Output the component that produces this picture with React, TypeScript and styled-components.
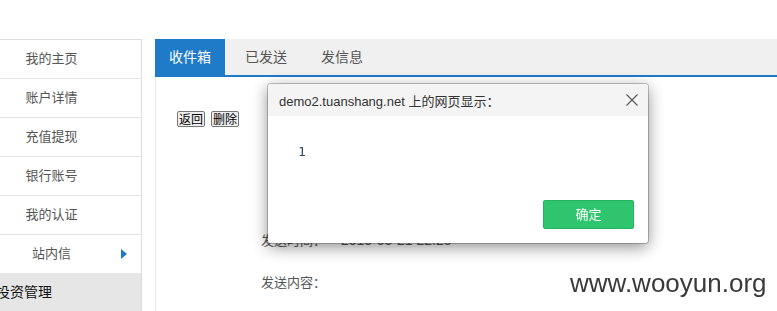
import React from 'react';
import styled, { createGlobalStyle } from 'styled-components';

const GlobalStyle = createGlobalStyle`
  html, body {
    margin: 0;
    padding: 0;
    background: #fff;
    overflow: hidden;
  }
  body {
    font-family: "Liberation Sans", "Noto Sans CJK SC", sans-serif;
  }
`;

const menuItems = ['我的主页', '账户详情', '充值提现', '银行账号', '我的认证', '站内信'];
const tabs = ['收件箱', '已发送', '发信息'];

const App = () => {
  return (
    <>
      <GlobalStyle />
      <S.page>
        <S.sidebar>
          {menuItems.map((name, i) => (
            <S.menuItem key={i}>
              {name}
              {i === menuItems.length - 1 && <S.arrow />}
            </S.menuItem>
          ))}
          <S.groupHeader>投资管理</S.groupHeader>
        </S.sidebar>
        <S.main>
          <S.tabBar>
            {tabs.map((t, i) => (
              <S.tab key={i} $active={i === 0}>
                {t}
              </S.tab>
            ))}
          </S.tabBar>
          <S.panel>
            <S.btnRow>
              <S.plainBtn>返回</S.plainBtn>
              <S.plainBtn>删除</S.plainBtn>
            </S.btnRow>
            <S.infoBlock>
              <S.infoRow>
                发送时间：<S.infoValue>2015-05-21 22:25</S.infoValue>
              </S.infoRow>
              <S.infoRow>发送内容：</S.infoRow>
            </S.infoBlock>
          </S.panel>
        </S.main>
      </S.page>

      <S.dialog>
        <S.dialogHeader>
          <S.dialogTitle>demo2.tuanshang.net 上的网页显示：</S.dialogTitle>
          <S.closeBtn>
            <svg width="12" height="12" viewBox="0 0 12 12">
              <path d="M0.5 0.5 L11.5 11.5 M11.5 0.5 L0.5 11.5" stroke="#555" strokeWidth="1.1" fill="none" />
            </svg>
          </S.closeBtn>
        </S.dialogHeader>
        <S.dialogBody>1</S.dialogBody>
        <S.dialogFooter>
          <S.okBtn>确定</S.okBtn>
        </S.dialogFooter>
      </S.dialog>

      <S.watermark>www.wooyun.org</S.watermark>
    </>
  );
};

const S = {
  page: styled.div`
    display: flex;
    align-items: flex-start;
    padding-top: 39px;
    height: 311px;
    box-sizing: border-box;
  `,
  sidebar: styled.div`
    margin-left: -38px;
    width: 179px;
    flex-shrink: 0;
    border-top: 1px solid #ddd;
    border-right: 1px solid #ddd;
  `,
  menuItem: styled.div`
    position: relative;
    height: 38px;
    line-height: 38px;
    border-bottom: 1px solid #e6e6e6;
    text-align: center;
    font-size: 13px;
    color: #555;
  `,
  arrow: styled.span`
    position: absolute;
    right: 14px;
    top: 14px;
    width: 0;
    height: 0;
    border-top: 5px solid transparent;
    border-bottom: 5px solid transparent;
    border-left: 6px solid #1f7ac8;
  `,
  groupHeader: styled.div`
    height: 37px;
    line-height: 37px;
    padding-left: 34px;
    background: #e6e6e6;
    border-bottom: 1px solid #ddd;
    font-size: 14px;
    color: #111;
  `,
  main: styled.div`
    flex: 1;
    margin-left: 13px;
    align-self: stretch;
    display: flex;
    flex-direction: column;
  `,
  tabBar: styled.div`
    display: flex;
    height: 36px;
    background: #f0f0f0;
    border-bottom: 2px solid #1f7ac8;
  `,
  tab: styled.div<{ $active?: boolean }>`
    padding: 0 14px;
    margin-left: ${(p) => (p.$active ? '0' : '6px')};
    line-height: 36px;
    font-size: 14px;
    color: ${(p) => (p.$active ? '#fff' : '#555')};
    background: ${(p) => (p.$active ? '#1f7ac8' : 'transparent')};
  `,
  panel: styled.div`
    flex: 1;
    border-left: 1px solid #e8e8e8;
    padding: 34px 0 0 21px;
  `,
  btnRow: styled.div`
    display: flex;
    gap: 6px;
  `,
  plainBtn: styled.button`
    height: 16px;
    padding: 0 1px;
    font-family: "Noto Sans CJK SC", sans-serif;
    font-size: 12px;
    line-height: 14px;
    color: #000;
    background: #efefef;
    border: 1px solid #767676;
    border-radius: 2px;
  `,
  infoBlock: styled.div`
    margin-top: 103px;
    padding-left: 84px;
    display: flex;
    flex-direction: column;
    gap: 22px;
  `,
  infoRow: styled.div`
    line-height: 20px;
    font-size: 13px;
    color: #555;
  `,
  infoValue: styled.span`
    margin-left: 15px;
    font-size: 14px;
  `,
  dialog: styled.div`
    position: fixed;
    left: 268px;
    top: 84px;
    width: 380px;
    height: 159px;
    background: #fff;
    border-radius: 3px;
    box-shadow: 0 0 0 1px rgba(0, 0, 0, 0.22), 0 4px 16px rgba(0, 0, 0, 0.45);
    display: flex;
    flex-direction: column;
    overflow: hidden;
  `,
  dialogHeader: styled.div`
    height: 32px;
    background: #f4f4f4;
    display: flex;
    align-items: center;
    justify-content: space-between;
    padding: 0 10px 0 11px;
  `,
  dialogTitle: styled.div`
    font-size: 13px;
    color: #333;
  `,
  closeBtn: styled.div`
    display: flex;
    align-items: center;
    width: 12px;
    height: 12px;
  `,
  dialogBody: styled.div`
    flex: 1;
    padding: 28px 0 0 30px;
    font-family: "DejaVu Sans Mono", "Liberation Mono", monospace;
    font-size: 13px;
    color: #2d4a68;
  `,
  dialogFooter: styled.div`
    display: flex;
    justify-content: flex-end;
    padding: 0 14px 14px 0;
  `,
  okBtn: styled.div`
    width: 89px;
    height: 27px;
    line-height: 27px;
    text-align: center;
    background: #2ec56e;
    border: 1px solid #22b45f;
    border-radius: 2px;
    color: #fff;
    font-size: 13px;
  `,
  watermark: styled.div`
    position: fixed;
    left: 570px;
    top: 265px;
    font-family: "Liberation Sans", Arial, sans-serif;
    font-size: 26px;
    line-height: 36px;
    color: #3a3a3a;
  `,
};

export default App;
